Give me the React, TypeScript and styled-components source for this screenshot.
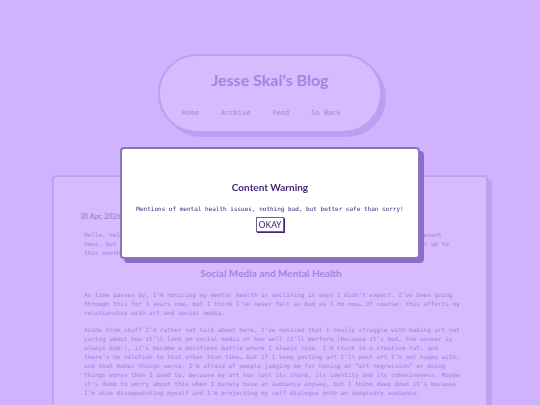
import React from "react";
import styled, { createGlobalStyle } from "styled-components";

const GlobalStyle = createGlobalStyle`
  * { box-sizing: border-box; }
  html, body { height: 100%; }
  body {
    margin: 0;
    overflow: hidden;
    background: #d0b2ff;
    color: #a482da;
    font-family: "DejaVu Sans Mono", monospace;
    font-size: 6px;
    line-height: 9px;
  }
  h1, h2, p { margin: 0; }
`;

const display = `Lato, "Noto Sans", sans-serif`;
const sans = `"Noto Sans", "Open Sans", sans-serif`;

const Page = styled.div`
  display: flex;
  flex-direction: column;
  align-items: center;
  gap: 42px;
  padding: 54px 52px 0;
`;

const Header = styled.header`
  width: 224px;
  max-width: 100%;
  padding: 13px 22px;
  border: 2px solid #be9eee;
  border-radius: 39px;
  background: #d6bcff;
  box-shadow: 4px 4px 0 #be9ef2;
`;

const SiteTitle = styled.h1`
  font: 700 16px/22px ${display};
  color: #a884e0;
  text-align: center;
`;

const Nav = styled.nav`
  display: flex;
  gap: 22px;
  margin-top: 18px;
`;

const NavLink = styled.a`
  color: #a786dc;
  font-size: 7px;
  line-height: 9px;
  text-decoration: none;
  white-space: nowrap;
`;

const Post = styled.main`
  width: 100%;
  padding: 35px 24px 40px 26px;
  border: 2px solid #c1a1f0;
  border-radius: 4px;
  background: #d6bcff;
  box-shadow: 4px 4px 0 #c0a0f3;
`;

const PostDate = styled.time`
  display: block;
  font: 700 7px/9px ${display};
  color: #a884e0;
`;

const Body = styled.div`
  display: flex;
  flex-direction: column;
  gap: 8px;
  padding-left: 4px;
`;

const Intro = styled(Body)`
  margin-top: 9px;
`;

const Heading = styled.h2<{ $strong?: boolean }>`
  font: 700 10px/13px ${display};
  color: ${(p) => (p.$strong ? "#442878" : "#a884e0")};
  text-align: center;
`;

const PostHeading = styled(Heading)`
  margin: 10px 0;
`;

const Overlay = styled.div`
  position: fixed;
  inset: 0;
  display: flex;
  align-items: center;
  justify-content: center;
`;

const Dialog = styled.section`
  display: flex;
  flex-direction: column;
  align-items: center;
  width: 300px;
  max-width: 100%;
  padding: 32px 14px 25px;
  border: 2px solid #8a76b2;
  border-radius: 4px;
  background: #fff;
  box-shadow: 4px 4px 0 #8c6ccb;
`;

const Message = styled.p`
  margin: 10px 0 4px;
  color: #442878;
  white-space: nowrap;
`;

const OkayButton = styled.button`
  padding: 0 2px;
  border: 1px solid #76608f;
  border-radius: 0;
  background: #fff;
  box-shadow: 1px 1px 0 #442878;
  color: #442060;
  font: 400 9px/13px ${sans};
`;

const links = ["Home", "Archive", "Feed", "Go Back"];

export default function App() {
  return (
    <>
      <GlobalStyle />
      <Page>
        <Header>
          <SiteTitle>Jesse Skai's Blog</SiteTitle>
          <Nav>
            {links.map((label) => (
              <NavLink key={label} href="#">{label}</NavLink>
            ))}
          </Nav>
        </Header>
        <Post>
          <PostDate dateTime="2026-04-30">30 Apr, 2026</PostDate>
          <Intro>
            <p>
              Hello, hello! It’s been a little while since my last entry, and I don’t have a lot of very relevant
              news, but I still wanted to sit down and write a bit about how life has gone and what I’ve been up to
              this month.
            </p>
          </Intro>
          <PostHeading>Social Media and Mental Health</PostHeading>
          <Body>
            <p>
              As time passes by, I’m noticing my mental health is declining in ways I didn’t expect. I’ve been going
              through this for 3 years now, but I think I’ve never felt as bad as I do now… Of course, this affects my
              relationship with art and social media.
            </p>
            <p>
              Aside from stuff I’d rather not talk about here, I’ve noticed that I really struggle with making art not
              caring about how it’ll look on social media or how well it’ll perform (because it’s bad, the answer is
              always bad!), it’s become a pointless battle where I always lose. I’m stuck in a creative rut, and
              there’s no solution to that other than time… but if I keep posting art I’ll post art I’m not happy with,
              and that makes things worse. I’m afraid of people judging me for having an “art regression” or doing
              things worse than I used to, because my art has lost its charm, its identity and its cohesiveness. Maybe
              it’s dumb to worry about this when I barely have an audience anyway, but I think deep down it’s because
              I’m also disappointing myself and I’m projecting my self dialogue onto an imaginary audience.
            </p>
          </Body>
        </Post>
      </Page>
      <Overlay>
        <Dialog role="dialog" aria-modal="true" aria-labelledby="warning-title">
          <Heading $strong id="warning-title">Content Warning</Heading>
          <Message>Mentions of mental health issues, nothing bad, but better safe than sorry!</Message>
          <OkayButton type="button">OKAY</OkayButton>
        </Dialog>
      </Overlay>
    </>
  );
}
